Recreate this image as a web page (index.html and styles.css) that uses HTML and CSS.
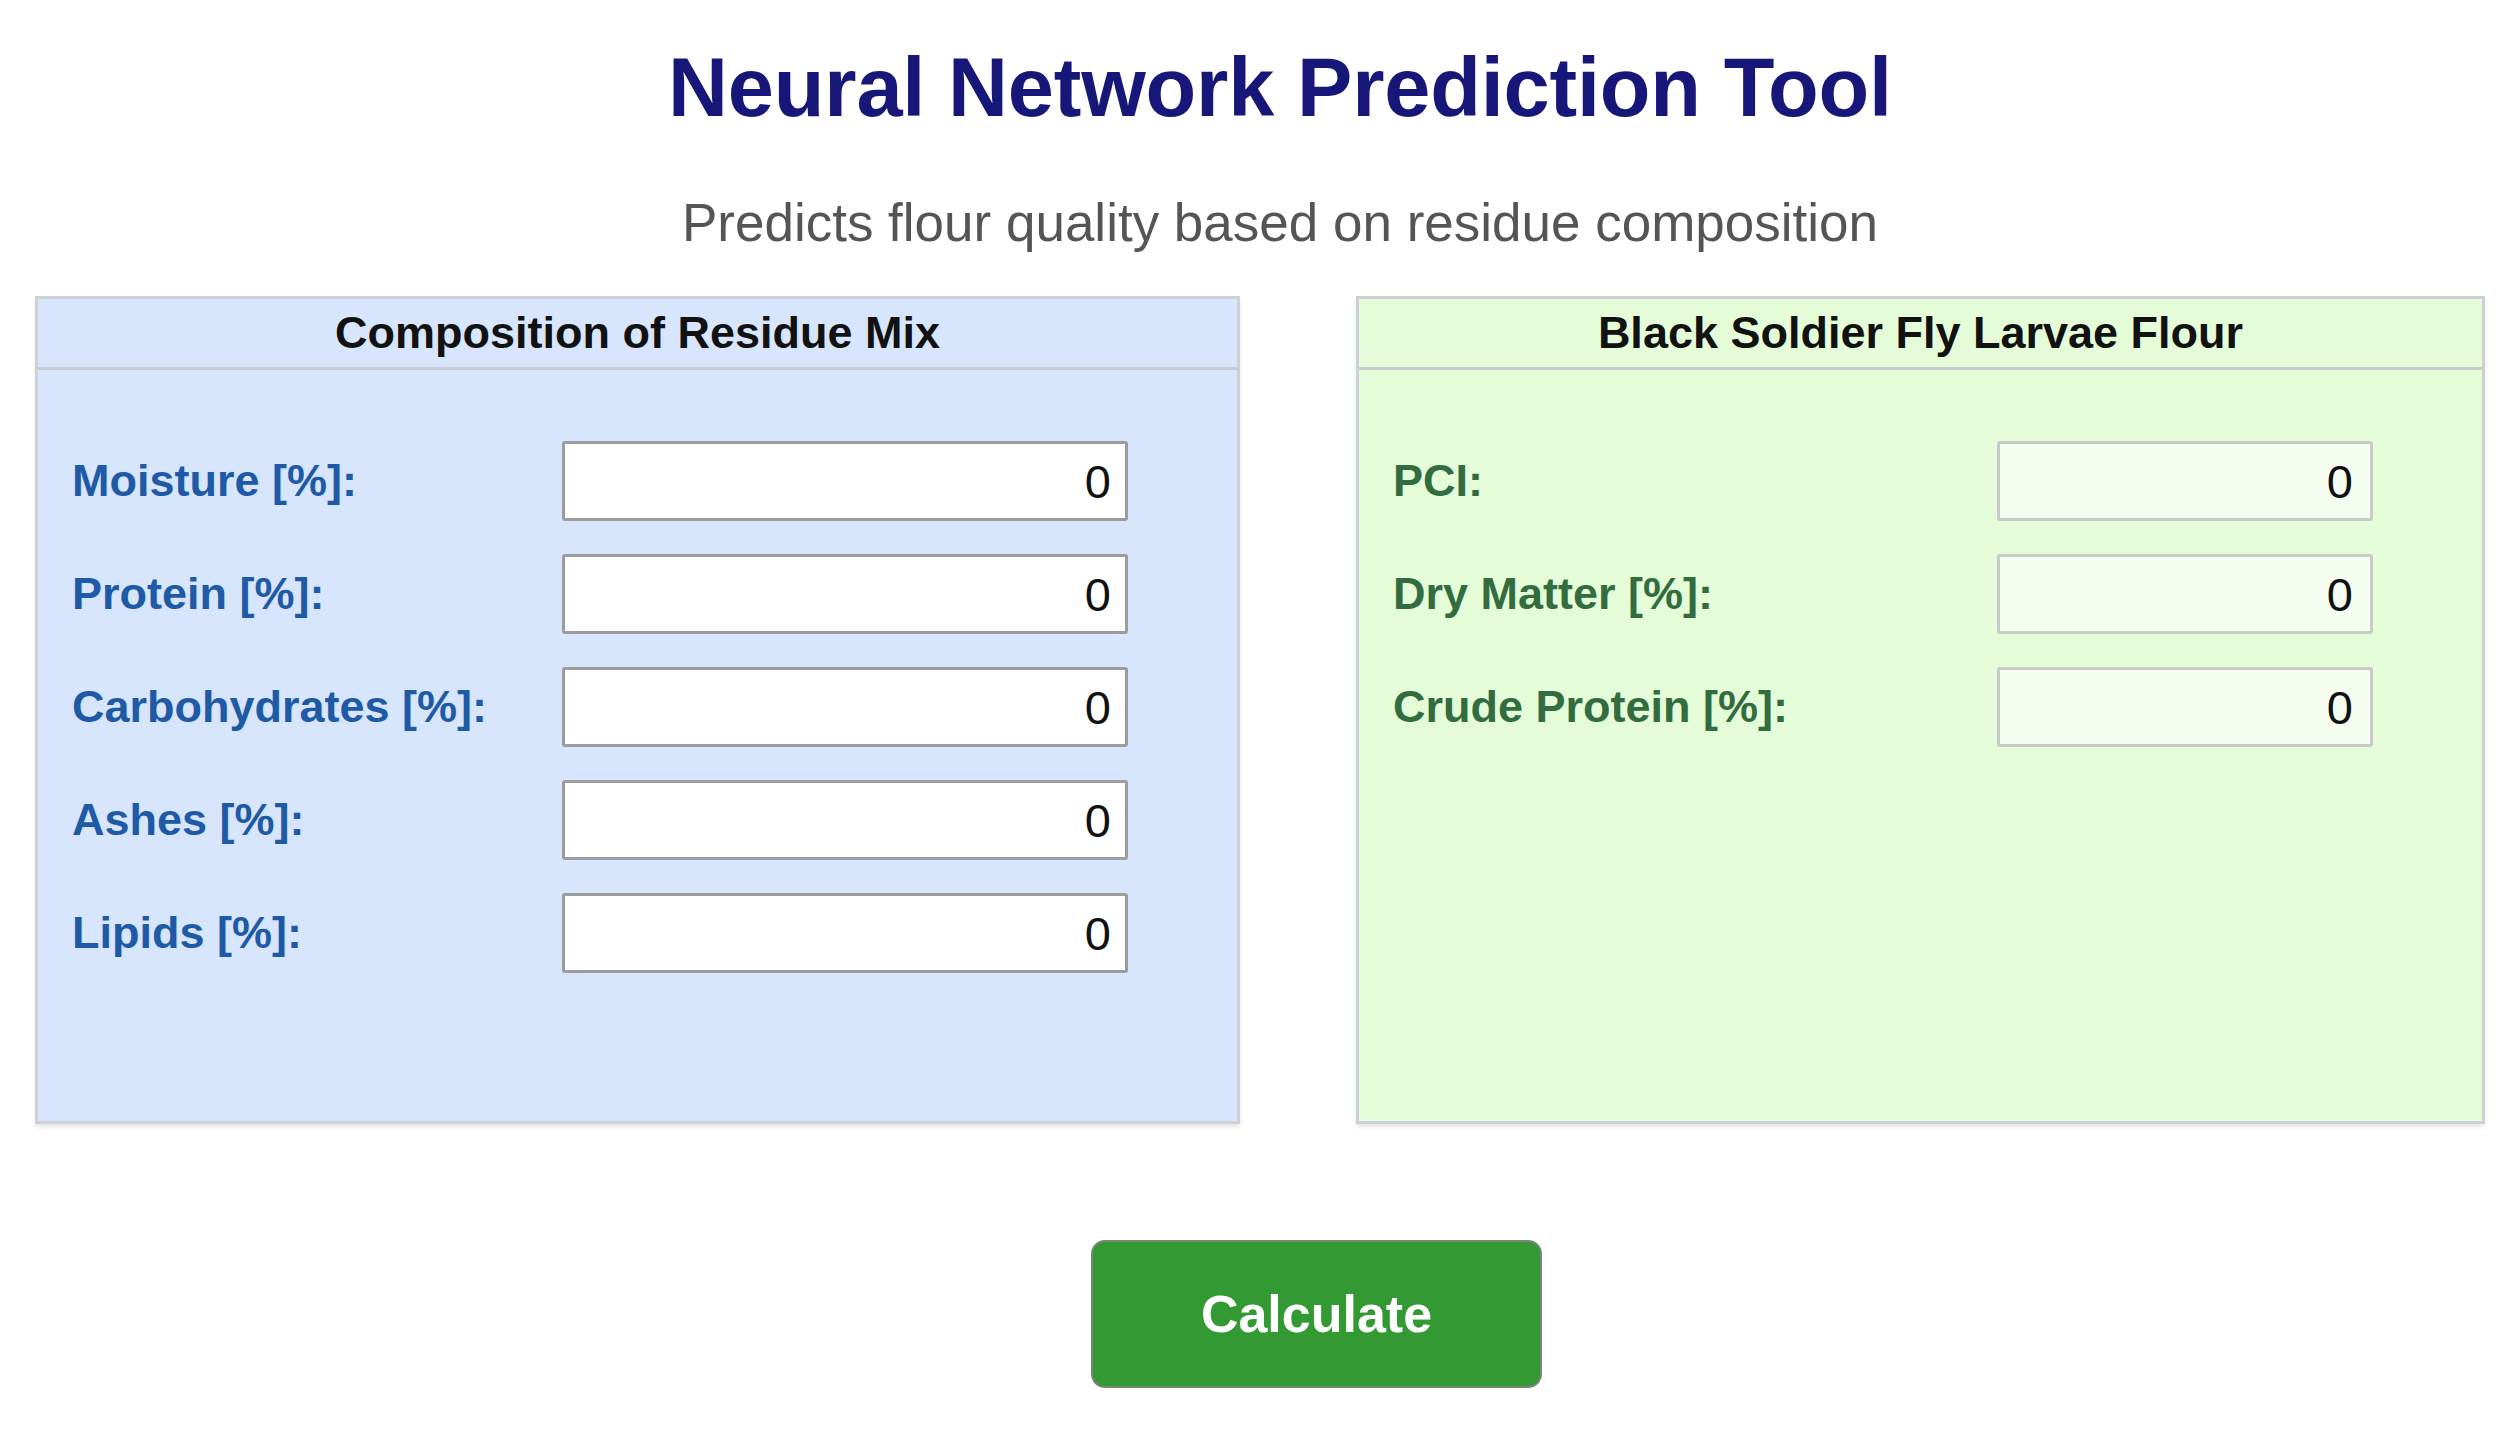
FILE: index.html
```html
<!DOCTYPE html>
<html lang="en">
<head>
<meta charset="utf-8">
<title>Neural Network Prediction Tool</title>
<link rel="stylesheet" href="styles.css">
</head>
<body>
<div class="page">
  <h1 class="title">Neural Network Prediction Tool</h1>
  <p class="subtitle">Predicts flour quality based on residue composition</p>

  <div class="panels">
    <section class="panel panel-input">
      <div class="panel-head">Composition of Residue Mix</div>
      <div class="panel-body rows-input">
        <label class="lbl">Moisture [%]:</label>
        <input class="field" type="text" value="0">
        <label class="lbl">Protein [%]:</label>
        <input class="field" type="text" value="0">
        <label class="lbl">Carbohydrates [%]:</label>
        <input class="field" type="text" value="0">
        <label class="lbl">Ashes [%]:</label>
        <input class="field" type="text" value="0">
        <label class="lbl">Lipids [%]:</label>
        <input class="field" type="text" value="0">
      </div>
    </section>

    <section class="panel panel-output">
      <div class="panel-head">Black Soldier Fly Larvae Flour</div>
      <div class="panel-body rows-output">
        <label class="lbl">PCI:</label>
        <input class="field" type="text" value="0" readonly>
        <label class="lbl">Dry Matter [%]:</label>
        <input class="field" type="text" value="0" readonly>
        <label class="lbl">Crude Protein [%]:</label>
        <input class="field" type="text" value="0" readonly>
      </div>
    </section>
  </div>

  <div class="actions">
    <button class="btn" type="button">Calculate</button>
  </div>
</div>
</body>
</html>
```

FILE: styles.css
```css
* { box-sizing: border-box; }

html, body {
  margin: 0;
  padding: 0;
  background: #ffffff;
}

body {
  font-family: "Liberation Sans", Arial, sans-serif;
  color: #111;
}

.page {
  width: 2519px;
  padding-top: 46px;
}

.title {
  margin: 0;
  padding-left: 41px;
  text-align: center;
  font-size: 83px;
  line-height: 83px;
  font-weight: bold;
  color: #17177a;
  letter-spacing: -0.2px;
}

.subtitle {
  margin: 67px 0 0 0;
  padding-left: 41px;
  text-align: center;
  font-size: 53px;
  line-height: 53px;
  color: #555555;
}

.panels {
  display: grid;
  grid-template-columns: 1205px 1129px;
  column-gap: 116px;
  margin: 47px 0 0 35px;
}

.panel {
  border: 3px solid #cdd0d4;
  box-shadow: 0 3px 4px rgba(0, 0, 0, 0.10);
}

.panel-input { background: #d7e5fd; }
.panel-output { background: #e4fdd8; }

.panel-head {
  height: 71px;
  border-bottom: 3px solid #c9cdd2;
  display: flex;
  align-items: center;
  justify-content: center;
  font-size: 45px;
  font-weight: bold;
  color: #121212;
}

.panel-body {
  display: grid;
  align-items: center;
  row-gap: 33px;
  grid-auto-rows: 80px;
  padding: 71px 0 148px 34px;
  align-content: start;
}

.rows-input { grid-template-columns: 490px 566px; }
.rows-output { grid-template-columns: 604px 376px; }

.lbl {
  font-size: 45px;
  font-weight: bold;
  white-space: nowrap;
}

.panel-input .lbl { color: #1e5aa6; }
.panel-output .lbl { color: #326c3f; }

.field {
  height: 80px;
  width: 100%;
  margin: 0;
  font-family: "Liberation Sans", Arial, sans-serif;
  font-size: 47px;
  color: #111;
  text-align: right;
  padding: 0 14px 0 10px;
  border-radius: 3px;
  outline: none;
}

.panel-input .field {
  background: #ffffff;
  border: 3px solid #9c9c9c;
}

.panel-output .field {
  background: #f4fdef;
  border: 3px solid #c9cbc8;
  padding-right: 17px;
}

.actions {
  display: flex;
  margin-top: 116px;
  padding-left: 1091px;
}

.btn {
  width: 451px;
  height: 148px;
  background: #339933;
  color: #ffffff;
  font-family: "Liberation Sans", Arial, sans-serif;
  font-size: 52px;
  font-weight: bold;
  border: 2px solid #7a857a;
  border-radius: 14px;
  cursor: pointer;
}
```
